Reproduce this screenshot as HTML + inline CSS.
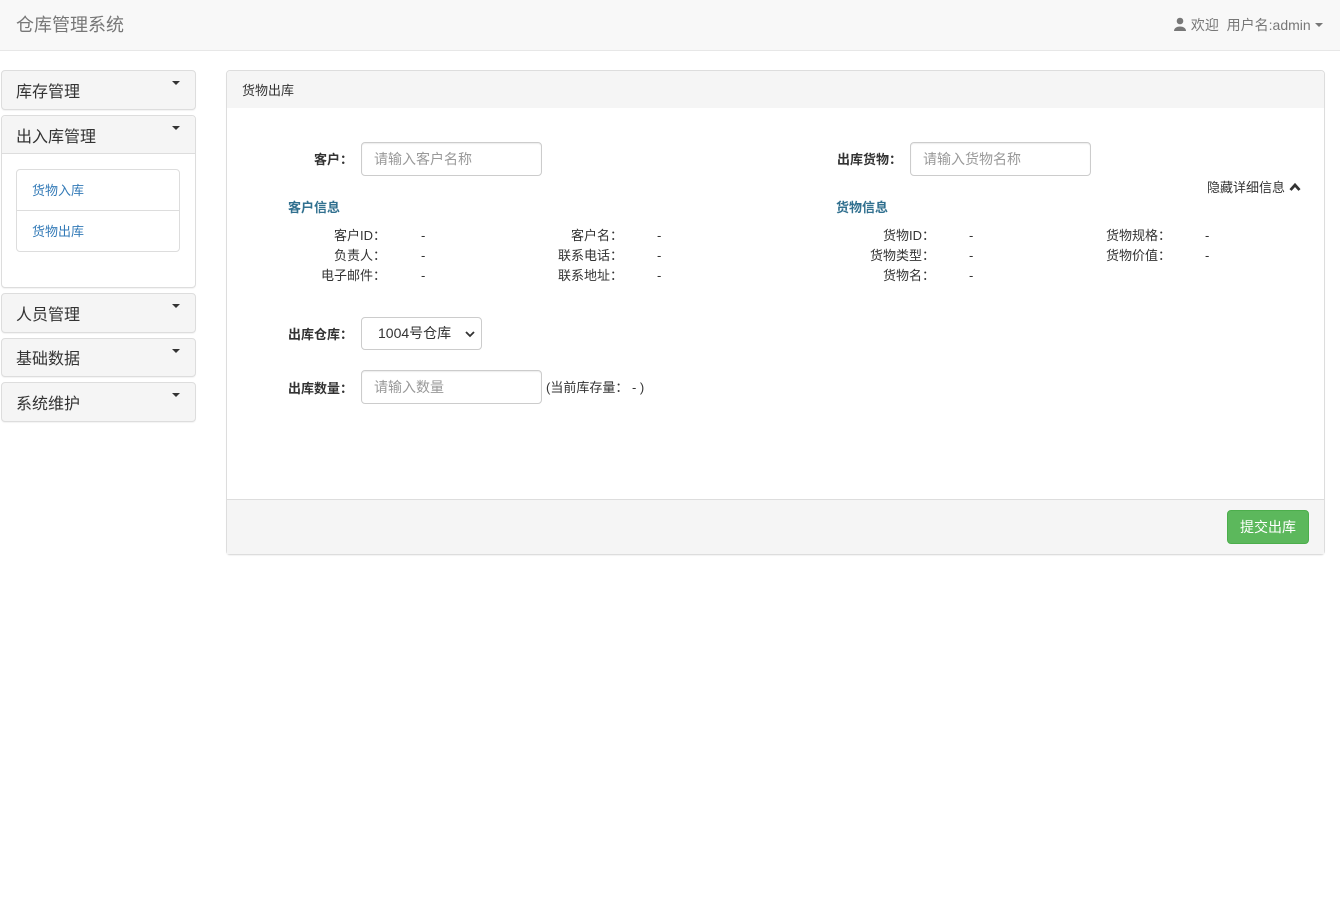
<!DOCTYPE html>
<html><head><meta charset="utf-8"><style>
*{box-sizing:border-box;margin:0;padding:0}
body{width:1340px;height:914px;position:relative;background:#fff;font-family:"Liberation Sans","Noto Sans CJK SC",sans-serif;font-size:13px;color:#333;overflow:hidden}
.a{position:absolute;white-space:nowrap}
.nav{left:0;top:0;width:1340px;height:51px;background:#f8f8f8;border-bottom:1px solid #e7e7e7}
.sp{position:absolute;left:1px;width:195px;border:1px solid #ddd;border-radius:4px;background:#f5f5f5;box-shadow:0 1px 1px rgba(0,0,0,.05)}
.sp .t{position:absolute;left:14px;font-size:16px;color:#333}
.car{position:absolute;right:15px;top:10px;width:0;height:0;border-left:4px solid transparent;border-right:4px solid transparent;border-top:4px solid #333}
.inp{position:absolute;border:1px solid #ccc;border-radius:4px;background:#fff;color:#999;font-size:14px;padding-left:12px;box-shadow:inset 0 1px 1px rgba(0,0,0,.075)}
.lb{position:absolute;font-weight:bold;text-align:right;white-space:nowrap}
.r{position:absolute;text-align:right;white-space:nowrap;line-height:20px}
.v{position:absolute;line-height:20px}
</style></head><body>
<div class="a nav"></div>
<div class="a" style="left:16px;top:11px;font-size:18px;color:#777">仓库管理系统</div>
<div class="a" style="left:1173px;top:15px;font-size:14px;color:#777"><svg width="14" height="14" viewBox="0 0 14 14" style="vertical-align:-1px"><circle cx="7" cy="4" r="3.3" fill="#777"/><path d="M1 14 C1 8 13 8 13 14Z" fill="#777"/></svg> 欢迎&nbsp; 用户名:admin <span style="display:inline-block;border-left:4px solid transparent;border-right:4px solid transparent;border-top:4px solid #777;vertical-align:3px"></span></div>

<div class="sp" style="top:70px;height:40px"><div class="t" style="top:7px">库存管理</div><div class="car"></div></div>
<div class="sp" style="top:115px;height:173px;background:#fff">
 <div style="position:absolute;left:0;top:0;width:193px;height:38px;background:#f5f5f5;border-bottom:1px solid #ddd;border-radius:4px 4px 0 0"></div>
 <div class="t" style="top:7px">出入库管理</div><div class="car"></div>
 <div style="position:absolute;left:14px;top:53px;width:164px;height:83px;border:1px solid #ddd;border-radius:4px">
  <div style="height:41px;border-bottom:1px solid #ddd;padding:10px 0 0 15px;color:#337ab7">货物入库</div>
  <div style="padding:10px 0 0 15px;color:#337ab7">货物出库</div>
 </div>
</div>
<div class="sp" style="top:293px;height:40px"><div class="t" style="top:7px">人员管理</div><div class="car"></div></div>
<div class="sp" style="top:338px;height:39px"><div class="t" style="top:6px">基础数据</div><div class="car"></div></div>
<div class="sp" style="top:382px;height:40px"><div class="t" style="top:7px">系统维护</div><div class="car"></div></div>

<div class="a" style="left:226px;top:70px;width:1099px;height:485px;border:1px solid #ddd;border-radius:4px;box-shadow:0 1px 1px rgba(0,0,0,.05)">
 <div style="position:absolute;left:0;top:0;width:1097px;height:37px;background:#f5f5f5;border-radius:4px 4px 0 0"></div>
 <div style="position:absolute;left:15px;top:9px">货物出库</div>
 <div style="position:absolute;left:0;top:428px;width:1097px;height:55px;background:#f5f5f5;border-top:1px solid #ddd"></div>
 <div style="position:absolute;left:1000px;top:439px;width:82px;height:34px;background:#5cb85c;border:1px solid #4cae4c;border-radius:4px;color:#fff;font-size:14px;text-align:center;line-height:32px">提交出库</div>
</div>

<div class="lb" style="right:987px;top:149px">客户：</div>
<div class="inp" style="left:361px;top:142px;width:181px;height:34px;line-height:32px">请输入客户名称</div>
<div class="lb" style="right:438px;top:149px">出库货物：</div>
<div class="inp" style="left:910px;top:142px;width:181px;height:34px;line-height:32px">请输入货物名称</div>
<div class="a" style="left:1207px;top:177px">隐藏详细信息 <svg width="12" height="10" viewBox="0 0 12 10" style="vertical-align:0"><path d="M1.5 8 L6 3 L10.5 8" stroke="#333" stroke-width="2.8" fill="none"/></svg></div>

<div class="a" style="left:288px;top:197px;font-weight:bold;color:#31708f">客户信息</div>
<div class="a" style="left:836px;top:197px;font-weight:bold;color:#31708f">货物信息</div>

<div class="r" style="right:954px;top:226px">客户ID：<br>负责人：<br>电子邮件：</div>
<div class="v" style="left:421px;top:226px">-<br>-<br>-</div>
<div class="r" style="right:717px;top:226px">客户名：<br>联系电话：<br>联系地址：</div>
<div class="v" style="left:657px;top:226px">-<br>-<br>-</div>
<div class="r" style="right:405px;top:226px">货物ID：<br>货物类型：<br>货物名：</div>
<div class="v" style="left:969px;top:226px">-<br>-<br>-</div>
<div class="r" style="right:169px;top:226px">货物规格：<br>货物价值：</div>
<div class="v" style="left:1205px;top:226px">-<br>-</div>

<div class="lb" style="left:288px;top:324px">出库仓库：</div>
<div class="a" style="left:361px;top:317px;width:121px;height:33px;border:1px solid #ccc;border-radius:4px;background:#fff;font-size:14px;line-height:31px;padding-left:16px">1004号仓库<svg width="10" height="8" viewBox="0 0 10 8" style="position:absolute;right:6px;top:12px"><path d="M1 2 L5 6 L9 2" stroke="#333" stroke-width="1.8" fill="none"/></svg></div>
<div class="lb" style="left:288px;top:378px">出库数量：</div>
<div class="inp" style="left:361px;top:370px;width:181px;height:34px;line-height:32px">请输入数量</div>
<div class="a" style="left:546px;top:377px">(当前库存量：&nbsp;- )</div>
</body></html>
